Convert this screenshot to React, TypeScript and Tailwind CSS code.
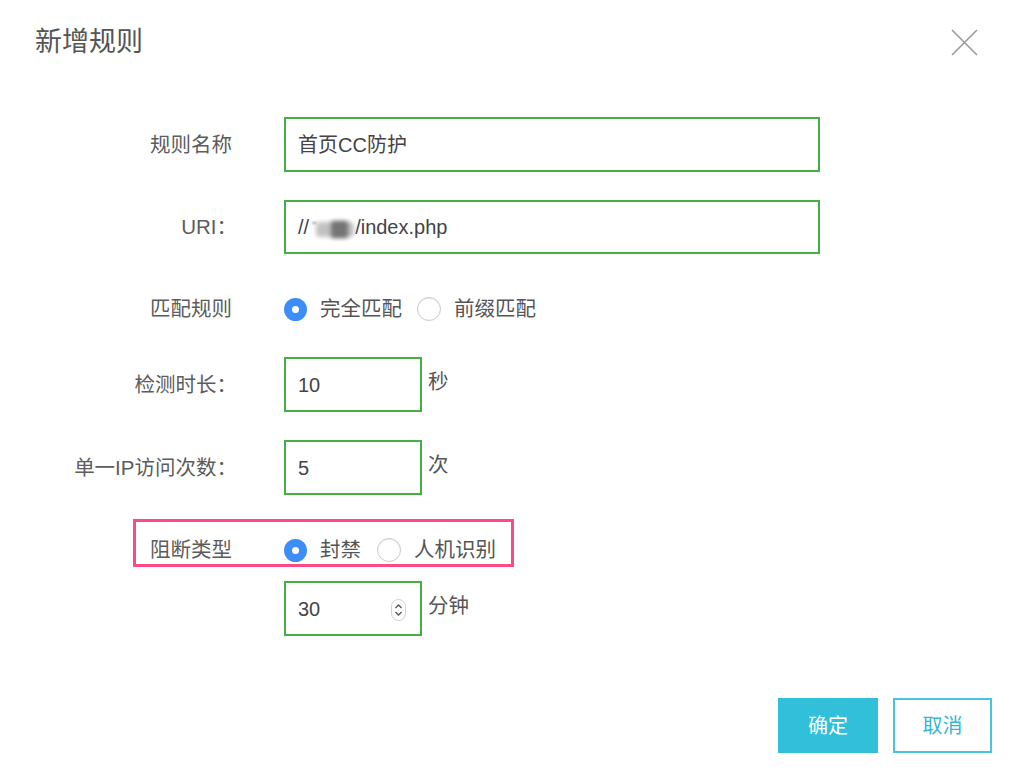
import React from "react";

const FONT = { fontFamily: '"Liberation Sans", "Noto Sans CJK SC", sans-serif' };

function Radio({ checked }: { checked?: boolean }) {
  return checked ? (
    <span className="flex h-[23px] w-[23px] shrink-0 items-center justify-center rounded-full bg-[#3c8df5]">
      <span className="block h-[7px] w-[7px] rounded-full bg-white" />
    </span>
  ) : (
    <span className="block h-[24px] w-[24px] shrink-0 rounded-full border border-[#c9c9c9] bg-white shadow-[inset_0_1px_1px_rgba(0,0,0,0.08)]" />
  );
}

function Label({ children, colon }: { children: React.ReactNode; colon?: boolean }) {
  return (
    <div className={`w-[237px] shrink-0 text-right text-[20.5px] leading-[30px] text-[#5c5c5c] ${colon ? "" : "pr-[5px]"}`}>
      {children}
    </div>
  );
}

export default function App() {
  return (
    <div style={FONT} className="relative h-[777px] w-[1024px] overflow-hidden bg-white">
      <div className="flex items-center justify-between pl-[35px] pr-[46px] pt-[24px]">
        <h1 className="text-[27px] leading-[36px] font-normal text-[#555]">新增规则</h1>
        <svg width="27" height="27" viewBox="0 0 27 27" className="shrink-0">
          <path d="M1 1 L26 26 M26 1 L1 26" stroke="#9a9a9a" strokeWidth="1.6" fill="none" />
        </svg>
      </div>

      <div className="flex flex-col">
        {/* row 1 */}
        <div className="mt-[57px] flex h-[55px] items-center">
          <Label>规则名称</Label>
          <div className="ml-[47px] flex h-[55px] w-[536px] items-center border-2 border-[#44b044] pl-[12px] text-[20px] text-[#444]">
            首页CC防护
          </div>
        </div>

        {/* row 2 */}
        <div className="mt-[28px] flex h-[54px] items-center">
          <Label colon>URI：</Label>
          <div className="ml-[47px] flex h-[54px] w-[536px] items-center border-2 border-[#44b044] pl-[12px] text-[20px] text-[#444]">
            <span>//</span>
            <span className="relative inline-block h-[22px] w-[46px] shrink-0">
              <span className="absolute left-[3px] top-[6px] h-[2px] w-[5px] bg-[#aaa] blur-[1px]" />
              <span className="absolute left-[7px] top-[6px] h-[15px] w-[38px] rounded-[4px] bg-[#c2c2c2] blur-[2px]" />
              <span className="absolute left-[22px] top-[5px] h-[17px] w-[17px] rounded-[3px] bg-[#747474] blur-[2px]" />
            </span>
            <span>/index.php</span>
          </div>
        </div>

        {/* row 3 radio */}
        <div className="mt-[40px] flex h-[30px] items-center">
          <Label>匹配规则</Label>
          <div className="ml-[47px] flex items-center text-[20.5px] leading-[30px] text-[#555]">
            <Radio checked />
            <span className="ml-[13px]">完全匹配</span>
            <span className="ml-[15px] flex"><Radio /></span>
            <span className="ml-[13px]">前缀匹配</span>
          </div>
        </div>

        {/* row 4 */}
        <div className="mt-[33px] flex h-[55px] items-center">
          <Label colon>检测时长：</Label>
          <div className="ml-[47px] flex h-[55px] w-[138px] items-center border-2 border-[#44b044] pl-[12px] text-[20px] text-[#444]">
            10
          </div>
          <span className="ml-[6px] self-start pt-[10px] text-[20.5px] leading-[30px] text-[#555]">秒</span>
        </div>

        {/* row 5 */}
        <div className="mt-[28px] flex h-[55px] items-center">
          <Label colon>单一IP访问次数：</Label>
          <div className="ml-[47px] flex h-[55px] w-[138px] items-center border-2 border-[#44b044] pl-[12px] text-[20px] text-[#444]">
            5
          </div>
          <span className="ml-[6px] self-start pt-[10px] text-[20.5px] leading-[30px] text-[#555]">次</span>
        </div>

        {/* row 6 radio with highlight */}
        <div className="relative mt-[40px] flex h-[30px] items-center">
          <Label>阻断类型</Label>
          <div className="ml-[47px] flex items-center text-[20.5px] leading-[30px] text-[#555]">
            <Radio checked />
            <span className="ml-[13px]">封禁</span>
            <span className="ml-[16px] flex"><Radio /></span>
            <span className="ml-[13px]">人机识别</span>
          </div>
          <div className="pointer-events-none absolute left-[133px] top-[-16px] h-[48px] w-[381px] border-[3px] border-[#fb4a84]" />
        </div>

        {/* row 7 */}
        <div className="mt-[16px] flex h-[55px] items-center">
          <div className="w-[237px] shrink-0" />
          <div className="relative ml-[47px] flex h-[55px] w-[138px] items-center border-2 border-[#44b044] pl-[12px] text-[20px] text-[#444]">
            30
            <svg width="15" height="22" viewBox="0 0 15 22" className="absolute right-[14px] top-[16px]">
              <rect x="0.5" y="0.5" width="14" height="21" rx="7" fill="#fff" stroke="#cfcfcf" />
              <path d="M4.5 9 L7.5 6 L10.5 9" stroke="#555" strokeWidth="1.3" fill="none" />
              <path d="M4.5 13 L7.5 16 L10.5 13" stroke="#555" strokeWidth="1.3" fill="none" />
            </svg>
          </div>
          <span className="ml-[6px] self-start pt-[10px] text-[20.5px] leading-[30px] text-[#555]">分钟</span>
        </div>

        {/* buttons */}
        <div className="mt-[62px] flex justify-end gap-[15px] pr-[32px]">
          <button className="flex h-[55px] w-[100px] items-center justify-center bg-[#31bfda] text-[20px] text-white">
            确定
          </button>
          <button className="flex h-[55px] w-[99px] items-center justify-center border-2 border-[#45c6de] bg-white text-[20px] text-[#2fb8d4]">
            取消
          </button>
        </div>
      </div>
    </div>
  );
}
